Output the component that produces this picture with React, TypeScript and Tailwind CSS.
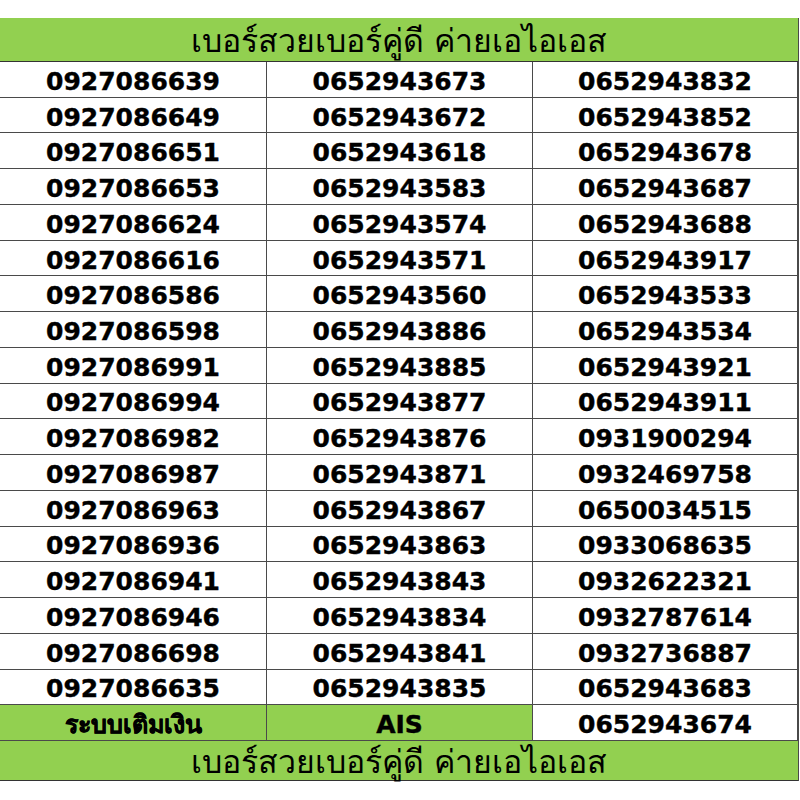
const col1 = [
  "0927086639", "0927086649", "0927086651", "0927086653", "0927086624", "0927086616",
  "0927086586", "0927086598", "0927086991", "0927086994", "0927086982", "0927086987",
  "0927086963", "0927086936", "0927086941", "0927086946", "0927086698", "0927086635",
];
const col2 = [
  "0652943673", "0652943672", "0652943618", "0652943583", "0652943574", "0652943571",
  "0652943560", "0652943886", "0652943885", "0652943877", "0652943876", "0652943871",
  "0652943867", "0652943863", "0652943843", "0652943834", "0652943841", "0652943835",
];
const col3 = [
  "0652943832", "0652943852", "0652943678", "0652943687", "0652943688", "0652943917",
  "0652943533", "0652943534", "0652943921", "0652943911", "0931900294", "0932469758",
  "0650034515", "0933068635", "0932622321", "0932787614", "0932736887", "0652943683",
];

const title = "เบอร์สวยเบอร์คู่ดี ค่ายเอไอเอส";

const Cell = ({ children, green }: { children: React.ReactNode; green?: boolean }) => (
  <div
    className={`flex items-center justify-center pt-[4px] border-b border-r border-[#4a4a4a] text-[25px] font-bold leading-none text-black [-webkit-text-stroke:0.4px_black] ${
      green ? "bg-[#92d050]" : "bg-white"
    }`}
  >
    {children}
  </div>
);

export default function App() {
  return (
    <div className="w-[800px] h-[800px] bg-white pt-[18px] font-['DejaVu_Sans','Tahoma','Noto_Sans',sans-serif]">
      <div className="w-[799px] border-r border-[#4a4a4a]">
        <div className="h-[44px] flex items-center justify-center pt-[3px] bg-[#92d050] border-b border-[#333] text-[32px] text-black leading-none">
          {title}
        </div>
        <div className="grid grid-cols-[267px_266px_265px] grid-rows-[repeat(19,1fr)] h-[679px]">
          {col1.map((n, i) => (
            <>
              <Cell key={n}>{n}</Cell>
              <Cell key={col2[i]}>{col2[i]}</Cell>
              <Cell key={col3[i]}>{col3[i]}</Cell>
            </>
          ))}
          <Cell green>ระบบเติมเงิน</Cell>
          <Cell green>AIS</Cell>
          <Cell>0652943674</Cell>
        </div>
        <div className="h-[40px] flex items-center justify-center pt-[3px] bg-[#92d050] border-b border-[#333] text-[32px] text-black leading-none">
          {title}
        </div>
      </div>
    </div>
  );
}
